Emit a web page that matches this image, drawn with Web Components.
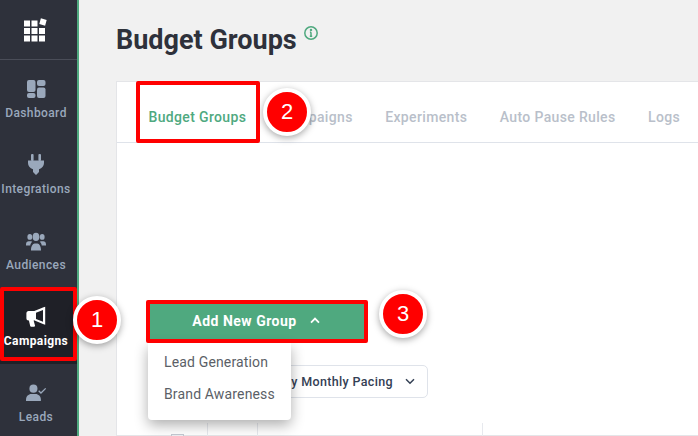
<!DOCTYPE html>
<html lang="en">
<head>
<meta charset="utf-8">
<title>Budget Groups</title>
<style>
  html, body { margin: 0; height: 436px; overflow: hidden; background: #f1f1f1; }
  body { font-family: Roboto, "Liberation Sans", sans-serif; position: relative; }
  .shell { display: flex; width: 698px; height: 436px; overflow: hidden; }
  .main { flex: 1; min-width: 0; }
</style>
</head>
<body>
<template id="side-nav-tpl">
  <style>
    :host { display: flex; flex-direction: column; flex: 0 0 77px; width: 77px; height: 436px; background: #2e313b; border-right: 2px solid #4fa97f; overflow: hidden; }
    .logo { height: 59px; flex: 0 0 59px; display: flex; align-items: center; justify-content: center; padding-right: 8px; border-bottom: 1px solid #4a4d58; }
  </style>
  <div class="logo">
    <svg width="24" height="24" viewBox="0 0 24 24" fill="#fff">
      <rect x="1" y="2.5" width="6" height="6"/><rect x="8.5" y="2.5" width="6" height="6"/>
      <rect x="1" y="10" width="6" height="6"/><rect x="8.5" y="10" width="6" height="6"/><rect x="16" y="10" width="6" height="6"/>
      <rect x="1" y="17.5" width="6" height="6"/><rect x="8.5" y="17.5" width="6" height="6"/><rect x="16" y="17.5" width="6" height="6"/>
      <rect x="17" y="1" width="6" height="6" transform="rotate(15 20 4)"/>
    </svg>
  </div>
  <slot></slot>
</template>

<template id="nav-item-tpl">
  <style>
    :host { display: flex; flex-direction: column; align-items: center; height: 76px; flex: 0 0 76px; padding: 17px 5px 0 0; box-sizing: border-box; color: #9aa8bb; font: 500 12px/16px Roboto, sans-serif; letter-spacing: .4px; white-space: nowrap; }
    :host([active]) { background: #1f2027; color: #fff; font-weight: 700; }
    .icon { height: 24px; display: flex; align-items: center; justify-content: center; margin-bottom: 4px; }
    ::slotted(svg) { display: block; fill: currentColor; }
  </style>
  <div class="icon"><slot name="icon"></slot></div>
  <slot></slot>
</template>

<template id="page-title-tpl">
  <style>
    :host { display: flex; align-items: flex-start; height: 81px; box-sizing: border-box; padding: 22px 0 0 37px; color: #2e313b; }
    h1 { margin: 0; font: 700 27px/36px Roboto, sans-serif; }
    svg { margin: 3px 0 0 6px; }
  </style>
  <h1><slot></slot></h1>
  <svg width="16" height="16" viewBox="0 0 16 16" fill="none" stroke="#4fa97f" stroke-width="1.5">
    <circle cx="8" cy="8" r="6.2"/><path d="M8 7.2v4M6.8 11.2h2.400M6.900 7.200H8"/><circle cx="8" cy="4.900" r=".5" fill="#4fa97f"/>
  </svg>
</template>

<template id="content-card-tpl">
  <style>
    :host { display: block; margin-left: 37px; height: 355px; background: #fff; border: 1px solid #e4e5e8; border-right: 0; box-sizing: border-box; }
  </style>
  <slot></slot>
</template>

<template id="tab-bar-tpl">
  <style>
    :host { display: flex; gap: 32.5px; height: 61px; box-sizing: border-box; padding: 0 0 0 31.5px; border-bottom: 1px solid #dfe3ea; align-items: flex-start; }
  </style>
  <slot></slot>
</template>

<template id="tab-item-tpl">
  <style>
    :host { display: block; padding-top: 26px; font: 500 14px/18px Roboto, sans-serif; letter-spacing: .35px; color: #b9bfca; white-space: nowrap; }
    :host([active]) { color: #4fa97f; }
  </style>
  <slot></slot>
</template>

<template id="add-button-tpl">
  <style>
    :host { display: block; position: relative; width: 216px; margin: 161px 0 0 32px; }
    .btn { display: flex; align-items: center; justify-content: center; gap: 13px; height: 37px; box-sizing: border-box; padding: 0 2px 3px 0; background: #4fa97f; color: #fff; font: 700 14px/18px Roboto, sans-serif; letter-spacing: .5px; }
    .btn svg { margin-top: -1px; }
    .menu { position: absolute; left: -1px; top: 39px; width: 143px; height: 77px; box-sizing: border-box; padding: 3px 0; background: #fff; border-radius: 0 0 4px 4px; box-shadow: 0 5px 14px rgba(0,0,0,.32); z-index: 2; }
  </style>
  <div class="btn">
    <span><slot name="label"></slot></span>
    <svg width="10" height="7" viewBox="0 0 10 7" fill="none" stroke="#fff" stroke-width="1.8"><path d="M1 5.600L5 1.600l4 4"/></svg>
  </div>
  <div class="menu"><slot></slot></div>
</template>

<template id="menu-item-tpl">
  <style>
    :host { display: block; height: 32px; padding-left: 16px; font: 400 14px/32px Roboto, sans-serif; letter-spacing: .15px; color: #5b5f67; white-space: nowrap; }
  </style>
  <slot></slot>
</template>

<template id="select-box-tpl">
  <style>
    :host { display: flex; align-items: center; justify-content: flex-end; gap: 12px; width: 279px; height: 33px; box-sizing: border-box; margin: 24px 0 0 32px; padding-right: 12px; border: 1px solid #dfe3ea; border-radius: 5px; font: 500 12.5px/16px Roboto, sans-serif; letter-spacing: .35px; color: #344054; white-space: nowrap; }
  </style>
  <slot></slot>
  <svg width="10" height="7" viewBox="0 0 10 7" fill="none" stroke="#344054" stroke-width="1.5"><path d="M1 1.200l4 4 4-4"/></svg>
</template>

<template id="data-table-tpl">
  <style>
    :host { display: grid; grid-template-columns: 91px 50px 225px 1fr; height: 20px; margin-top: 25px; }
    div { border-right: 1px solid #e7e9ee; display: flex; justify-content: center; }
    div:last-child { border: 0; }
    i { display: block; width: 13px; height: 13px; margin: 11px 0 0 30px; border: 1px solid #c4c9d2; background: #eceef1; box-sizing: border-box; }
  </style>
  <div><i></i></div><div></div><div></div><div></div>
</template>

<template id="high-light-tpl">
  <style>
    :host { display: block; position: absolute; box-sizing: border-box; border: 4px solid #f00; border-radius: 2px; z-index: 5; }
  </style>
</template>

<template id="step-badge-tpl">
  <style>
    :host { display: flex; align-items: center; justify-content: center; position: absolute; width: 40px; height: 40px; border-radius: 50%; background: #f00; border: 4px solid #fff; box-shadow: 0 2px 7px rgba(0,0,0,.35); color: #fff; font: 400 22px/1 "Liberation Sans", Arial, sans-serif; z-index: 6; }
  </style>
  <slot></slot>
</template>

<div class="shell">
  <side-nav>
    <nav-item>
      <svg slot="icon" width="20" height="20" viewBox="0 0 20 20"><rect x="1" y="1" width="8.500" height="12" rx="2"/><rect x="1" y="14" width="8.500" height="5" rx="2"/><rect x="11" y="1" width="8.500" height="6" rx="2"/><rect x="11" y="8.500" width="8.500" height="10.500" rx="2"/></svg>
      Dashboard
    </nav-item>
    <nav-item>
      <svg slot="icon" width="18" height="22" viewBox="0 0 18 22"><rect x="4" y="0" width="2.600" height="7" rx="1"/><rect x="11.400" y="0" width="2.600" height="7" rx="1"/><path d="M1 6.500h16v2.600c0 3-1.800 5.200-5 6.100V18L9 21l-3-3v-2.800c-3.200-.9-5-3.100-5-6.100z"/></svg>
      Integrations
    </nav-item>
    <nav-item>
      <svg slot="icon" width="20" height="19" viewBox="0 0 22 17.500" preserveAspectRatio="none"><circle cx="4.200" cy="4.500" r="2.700"/><circle cx="17.800" cy="4.500" r="2.700"/><circle cx="11" cy="4.500" r="3.700"/><path d="M0 11.500c0-2 1.300-3 3-3h2.500c.6 0 1 .2 1.400.5C5.600 10 4.800 11 4.700 12.500H0zM22 11.500c0-2-1.300-3-3-3h-2.500c-.6 0-1 .2-1.400.5 1.300 1 2.100 2 2.200 3.500H22zM5.500 16.500c0-3 1.800-6 4-6h3c2.200 0 4 3 4 6v.5h-11z"/></svg>
      Audiences
    </nav-item>
    <nav-item active>
      <svg slot="icon" width="21" height="22" viewBox="0 0 21 22"><path d="M17.600 1.300L19.200.8v18l-1.600-.5-9.600-4.100v.4H7.600l1.400 4.900c.2.700-.2 1.200-.9 1.200H5.200c-.5 0-.9-.3-1-.8L2.900 14.600H2.600C1.300 14.600.4 13.600.4 12.300V7.300C.4 6 1.300 5 2.600 5h5.700zM10 6.800v6.100l7 2.900V3.900z"/></svg>
      Campaigns
    </nav-item>
    <nav-item>
      <svg slot="icon" width="21" height="18" viewBox="0 0 24 20"><circle cx="8.500" cy="5" r="4.600"/><path d="M0 17.500c0-4 3-6.500 6-6.500h5c3 0 6 2.500 6 6.500V19H0z"/><path d="M14.500 7.500l2.600 2.600 5.400-5.400" fill="none" stroke="currentColor" stroke-width="1.500"/></svg>
      Leads
    </nav-item>
  </side-nav>

  <div class="main">
    <page-title>Budget Groups</page-title>
    <content-card>
      <tab-bar>
        <tab-item active>Budget Groups</tab-item>
        <tab-item>Campaigns</tab-item>
        <tab-item>Experiments</tab-item>
        <tab-item>Auto Pause Rules</tab-item>
        <tab-item>Logs</tab-item>
      </tab-bar>
      <add-button>
        <span slot="label">Add New Group</span>
        <menu-item>Lead Generation</menu-item>
        <menu-item>Brand Awareness</menu-item>
      </add-button>
      <select-box>Sort by Monthly Pacing</select-box>
      <data-table></data-table>
    </content-card>
  </div>
</div>

<high-light style="left:0;top:287px;width:77px;height:74px"></high-light>
<high-light style="left:136px;top:81px;width:124px;height:62px"></high-light>
<high-light style="left:146px;top:300px;width:222px;height:43px"></high-light>
<step-badge style="left:73px;top:296px">1</step-badge>
<step-badge style="left:263px;top:88px">2</step-badge>
<step-badge style="left:379px;top:290px">3</step-badge>

<script>
  // every element here is just a shadow root cloned from its template
  const tags = ['side-nav', 'nav-item', 'page-title', 'content-card', 'tab-bar', 'tab-item',
    'add-button', 'menu-item', 'select-box', 'data-table', 'high-light', 'step-badge'];

  for (const tag of tags) {
    customElements.define(tag, class extends HTMLElement {
      constructor() {
        super();
        const tpl = document.getElementById(tag + '-tpl');
        this.attachShadow({ mode: 'open' }).appendChild(tpl.content.cloneNode(true));
      }
    });
  }
</script>
</body>
</html>
